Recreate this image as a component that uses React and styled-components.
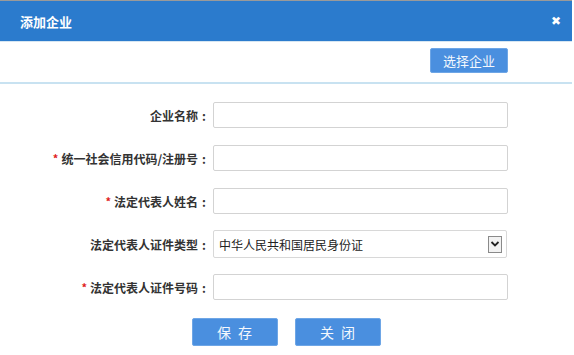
import React from 'react';
import styled, { createGlobalStyle } from 'styled-components';

const GlobalStyle = createGlobalStyle`
  html, body {
    margin: 0;
    padding: 0;
    background: #ffffff;
  }
  body {
    font-family: "Noto Sans CJK SC", "Liberation Sans", sans-serif;
  }
`;

const fields = [
  { label: '企业名称', required: false },
  { label: '统一社会信用代码/注册号', required: true },
  { label: '法定代表人姓名', required: true },
  { label: '法定代表人证件类型', required: false, select: true },
  { label: '法定代表人证件号码', required: true },
];

const App = () => {
  return (
    <>
      <GlobalStyle />
      <Dialog>
        <Header>
          <Title>添加企业</Title>
          <Close>✖</Close>
        </Header>
        <Toolbar>
          <Button $width={78} $height={25}>选择企业</Button>
        </Toolbar>
        <Form>
          {fields.map((f) => (
            <Row key={f.label}>
              <Label>
                {f.required && <Star>*</Star>}
                {f.label}
                <Colon>:</Colon>
              </Label>
              {f.select ? (
                <Select>
                  <span>中华人民共和国居民身份证</span>
                  <Arrow>
                    <svg width="10" height="8" viewBox="0 0 10 8">
                      <path d="M1.5 2 L5 5.5 L8.5 2" fill="none" stroke="#222" strokeWidth="1.8" />
                    </svg>
                  </Arrow>
                </Select>
              ) : (
                <Input />
              )}
            </Row>
          ))}
        </Form>
        <Footer>
          <Button $width={86} $height={28} $spaced>保存</Button>
          <Button $width={86} $height={28} $spaced>关闭</Button>
        </Footer>
      </Dialog>
    </>
  );
};

// styled components
const Dialog = styled.div`
  width: 572px;
  height: 355px;
  border-top: 1px solid #9a9a9a;
  background: #fff;
  box-sizing: border-box;
`;

const Header = styled.div`
  height: 40px;
  background: #2b7bcd;
  border-bottom: 1px solid #d6e6f2;
  display: flex;
  align-items: center;
  justify-content: space-between;
  padding: 0 11px 0 20px;
  color: #fff;
`;

const Title = styled.h2`
  margin: 0;
  font-size: 13px;
  font-weight: bold;
`;

const Close = styled.span`
  font-family: "DejaVu Sans", sans-serif;
  font-size: 12px;
  line-height: 1;
`;

const Toolbar = styled.div`
  height: 42px;
  display: flex;
  justify-content: flex-end;
  align-items: flex-start;
  padding: 6px 64px 0 0;
  box-sizing: border-box;
  border-bottom: 2px solid #c8e2f1;
`;

const Button = styled.button`
  width: ${(p) => p.$width}px;
  height: ${(p) => p.$height}px;
  background: #4a8fdf;
  border: 1px solid #6ea6e6;
  border-radius: 2px;
  color: #f4f8fd;
  font-family: "Noto Sans CJK SC", sans-serif;
  font-size: ${(p) => (p.$spaced ? '14px' : '13px')};
  letter-spacing: ${(p) => (p.$spaced ? '7px' : '0')};
  text-indent: ${(p) => (p.$spaced ? '7px' : '0')};
  padding: 0;
  cursor: pointer;
`;

const Form = styled.div`
  display: flex;
  flex-direction: column;
  gap: 17px;
  padding-top: 18px;
`;

const Row = styled.div`
  display: grid;
  grid-template-columns: 207px 295px;
  column-gap: 6px;
  align-items: center;
  height: 26px;
`;

const Label = styled.label`
  text-align: right;
  font-size: 12px;
  font-weight: bold;
  color: #333;
  white-space: nowrap;
`;

const Colon = styled.span`
  margin-left: 4px;
  margin-right: 1px;
`;

const Star = styled.span`
  color: #e02020;
  font-size: 11px;
  position: relative;
  top: -1px;
  margin-right: 3px;
`;

const Input = styled.input`
  height: 26px;
  box-sizing: border-box;
  border: 1px solid #d3d3d3;
  border-radius: 2px;
  outline: none;
`;

const Select = styled.div`
  height: 28px;
  width: 294px;
  margin: -1px 0;
  box-sizing: border-box;
  border: 1px solid #d8d8d8;
  border-radius: 2px;
  display: flex;
  align-items: center;
  justify-content: space-between;
  padding: 0 4px 0 5px;
  font-size: 12px;
  color: #222;
`;

const Arrow = styled.span`
  width: 14px;
  height: 17px;
  box-sizing: border-box;
  border: 1px solid #8a8a8a;
  background: #f2f2f2;
  display: flex;
  align-items: center;
  justify-content: center;
`;

const Footer = styled.div`
  display: flex;
  justify-content: center;
  gap: 17px;
  padding-top: 18px;
`;

export default App;
